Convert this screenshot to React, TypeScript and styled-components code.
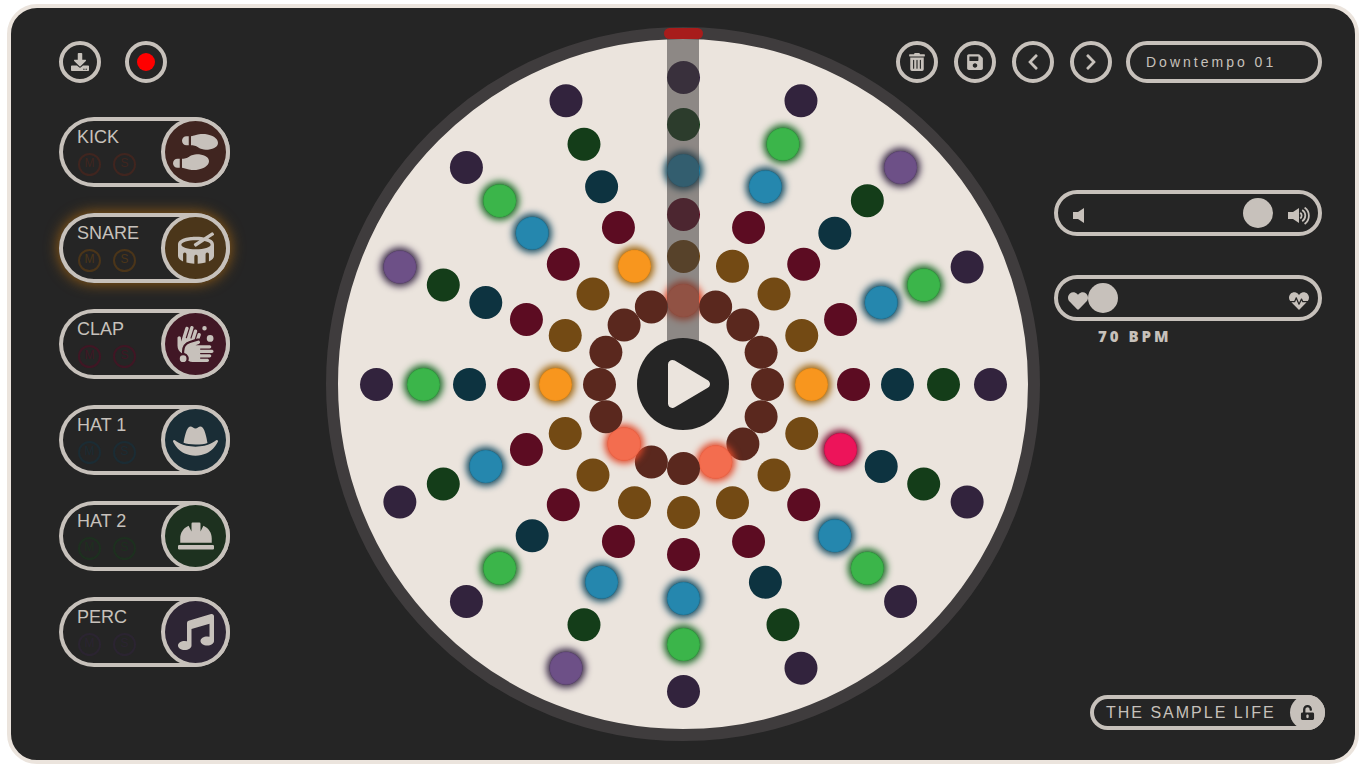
import React, { useState } from 'react';
import styled, { createGlobalStyle, css } from 'styled-components';
import {
  FaChevronLeft,
  FaChevronRight,
  FaDownload,
  FaDrum,
  FaHandsWash,
  FaHardHat,
  FaHatCowboy,
  FaHeart,
  FaHeartbeat,
  FaMusic,
  FaPlay,
  FaSave,
  FaShoePrints,
  FaTrashAlt,
  FaUnlockAlt,
} from 'react-icons/fa';

const ink = '#c7c1bb';
const cream = '#ebe4dd';
const dark = '#252525';
const rim = '#3f3c3d';

const GlobalStyle = createGlobalStyle`
  *, *::before, *::after { box-sizing: border-box; }
  body {
    margin: 0;
    background: #fff;
    color: ${ink};
    font-family: "Liberation Sans", Arial, sans-serif;
  }
  button, input { font: inherit; color: inherit; margin: 0; }
  button { padding: 0; background: none; cursor: pointer; }
`;

const Frame = styled.div`
  display: grid;
  min-height: calc(100vh - 8px);
  margin: 4px 7px;
  border: 4px solid ${cream};
  border-radius: 30px;
  background: ${dark};
  overflow: hidden;
`;

const Controls = styled.div`
  grid-area: 1 / 1;
  display: flex;
  justify-content: space-between;
  padding: 33px 30px 30px 48px;
`;

const LeftPanel = styled.section`
  display: flex;
  flex-direction: column;
  gap: 34px;
`;

const RightPanel = styled.section`
  display: flex;
  flex-direction: column;
  align-items: flex-end;
`;

const Toolbar = styled.div<{ $gap: number }>`
  display: flex;
  gap: ${(p) => p.$gap}px;
`;

const PresetBar = styled.div`
  display: flex;
  gap: 14px;
  padding-right: 3px;
`;

const RoundButton = styled.button`
  display: flex;
  align-items: center;
  justify-content: center;
  width: 42px;
  height: 42px;
  border: 4px solid ${ink};
  border-radius: 50%;
  svg { flex: none; width: 18px; height: 18px; }
`;

const RecordLight = styled.span`
  width: 18px;
  height: 18px;
  border-radius: 50%;
  background: #f00;
`;

const PresetName = styled.input`
  width: 196px;
  height: 42px;
  padding: 0 16px;
  border: 4px solid ${ink};
  border-radius: 21px;
  background: transparent;
  font-size: 14px;
  letter-spacing: 3px;
`;

const TrackList = styled.ul`
  display: flex;
  flex-direction: column;
  gap: 26px;
  margin: 0;
  padding: 0;
  list-style: none;
`;

const Track = styled.li<{ $glow?: boolean }>`
  display: flex;
  justify-content: space-between;
  width: 171px;
  height: 70px;
  border-radius: 35px;
  box-shadow: inset 0 0 0 4px ${ink}${(p) => (p.$glow ? ', 0 0 14px 1px #8f5a14' : '')};
`;

const TrackInfo = styled.div`
  padding: 10px 0 0 18px;
`;

const TrackName = styled.h2`
  margin: 0;
  font-size: 18px;
  line-height: 21px;
  font-weight: 400;
`;

const TrackSwitches = styled.div`
  display: flex;
  gap: 12px;
  margin: 5px 0 0 1px;
`;

const SmallSwitch = styled.button<{ $color: string }>`
  width: 23px;
  height: 23px;
  padding-bottom: 3px;
  border: 2px solid ${(p) => p.$color};
  border-radius: 50%;
  color: ${(p) => p.$color};
  font-size: 12px;
  line-height: 16px;
`;

const TrackPad = styled.button<{ $color: string; $iconWidth: number }>`
  display: flex;
  align-items: center;
  justify-content: center;
  width: 69px;
  height: 70px;
  border: 4px solid ${ink};
  border-radius: 50%;
  background: ${(p) => p.$color};
  svg {
    flex: none;
    height: 36px;
    width: ${(p) => p.$iconWidth}px;
  }
`;

const Sliders = styled.div`
  display: flex;
  flex-direction: column;
  gap: 39px;
  margin-top: 107px;
  padding-right: 3px;
`;

const SliderGroup = styled.div`
  display: flex;
  flex-direction: column;
`;

const SliderBox = styled.div`
  display: flex;
  align-items: center;
  justify-content: space-between;
  width: 268px;
  height: 46px;
  padding: 0 7px 0 8px;
  border: 4px solid ${ink};
  border-radius: 23px;
`;

const SliderIcon = styled.span`
  display: flex;
  justify-content: center;
  width: 24px;
  padding-top: 5px;
  svg { display: block; }
`;

const thumb = css`
  appearance: none;
  width: 30px;
  height: 30px;
  border: 0;
  border-radius: 50%;
  background: ${ink};
`;

const Range = styled.input`
  appearance: none;
  flex: 1;
  min-width: 0;
  height: 30px;
  margin: 0 8px 0 -2px;
  background: transparent;
  &::-webkit-slider-thumb { ${thumb} }
  &::-moz-range-thumb { ${thumb} }
`;

const Bpm = styled.output`
  padding: 5px 0 0 44px;
  font-family: "Open Sans", sans-serif;
  font-size: 15px;
  line-height: 20px;
  font-weight: 800;
  letter-spacing: 3px;
`;

const LibraryButton = styled.button`
  display: flex;
  align-items: center;
  justify-content: space-between;
  width: 235px;
  height: 35px;
  margin-top: auto;
  padding-left: 16px;
  border: 0;
  border-radius: 18px;
  box-shadow: inset 0 0 0 4px ${ink};
  font-size: 16px;
  letter-spacing: 2px;
`;

const LockBadge = styled.span`
  display: grid;
  place-items: center;
  width: 35px;
  height: 35px;
  border-radius: 50%;
  background: ${ink};
  color: ${dark};
  svg { height: 15px; width: auto; }
`;

const Wheel = styled.main`
  grid-area: 1 / 1;
  place-self: center;
  position: relative;
  display: grid;
  place-items: center;
  width: 714px;
  height: 714px;
  border: 12px solid ${rim};
  border-radius: 50%;
  background: ${cream};
`;

const Dot = styled.button<{ $angle: number; $radius: number; $fill: string; $glow?: string }>`
  position: absolute;
  top: calc(50% - 16px);
  left: calc(50% - 16px);
  width: 33px;
  height: 33px;
  border: 0;
  border-radius: 50%;
  background: ${(p) => p.$fill};
  box-shadow: ${(p) => (p.$glow ? `0 0 7px 3px ${p.$glow}, inset 0 0 1px ${p.$glow}` : 'none')};
  transform: rotate(${(p) => p.$angle}deg) translateY(-${(p) => p.$radius}px);
`;

const Playhead = styled.div`
  position: absolute;
  top: 0;
  left: calc(50% - 16px);
  width: 32px;
  height: 50%;
  background: ${rim};
  opacity: 0.55;
  pointer-events: none;
`;

const PlayheadCap = styled.div`
  position: absolute;
  top: -11px;
  left: calc(50% - 19px);
  width: 39px;
  height: 11px;
  border-radius: 6px;
  background: #a71c1b;
`;

const PlayButton = styled.button`
  position: relative;
  display: grid;
  place-items: center;
  width: 92px;
  height: 92px;
  padding-left: 11px;
  border: 0;
  border-radius: 50%;
  background: ${dark};
  color: ${cream};
  svg { height: 48px; width: auto; }
`;

const rings = [
  { name: 'Kick', radius: 84, off: '#5a281e', on: '#f36d4f', glow: '#e0492a', steps: [0, 7, 10] },
  { name: 'Snare', radius: 128, off: '#734a14', on: '#f8961e', glow: '#a0660f', steps: [4, 12, 15] },
  { name: 'Clap', radius: 170, off: '#5c0c22', on: '#ed145a', glow: '#7a0c30', steps: [5] },
  { name: 'Hat 1', radius: 214, off: '#0d3340', on: '#2587ae', glow: '#124a60', steps: [0, 1, 3, 6, 8, 9, 11, 14] },
  { name: 'Hat 2', radius: 260, off: '#143d19', on: '#3bb54a', glow: '#1b6a27', steps: [1, 3, 6, 8, 10, 12, 14] },
  { name: 'Perc', radius: 307, off: '#32233d', on: '#6d5087', glow: '#3a2a48', steps: [2, 9, 13] },
];

const tracks = [
  { name: 'KICK', line: '#40251f', pad: '#402520', Icon: FaShoePrints, iconWidth: 45 },
  { name: 'SNARE', line: '#4b3519', pad: '#4b361a', Icon: FaDrum, iconWidth: 36, glow: true },
  { name: 'CLAP', line: '#401624', pad: '#411725', Icon: FaHandsWash, iconWidth: 41 },
  { name: 'HAT 1', line: '#1b2c34', pad: '#1a2d36', Icon: FaHatCowboy, iconWidth: 45 },
  { name: 'HAT 2', line: '#1d301f', pad: '#1d311f', Icon: FaHardHat, iconWidth: 36 },
  { name: 'PERC', line: '#2b2431', pad: '#2d2534', Icon: FaMusic, iconWidth: 36 },
];

const speaker = 'M0 5h5l6-4v15l-6-4H0z';

const QuietIcon = () => (
  <svg width="11" height="17" viewBox="0 0 11 17" fill="currentColor" aria-hidden="true">
    <path d={speaker} />
  </svg>
);

const LoudIcon = () => (
  <svg width="23" height="18" viewBox="0 0 23 18" fill="currentColor" aria-hidden="true">
    <path d={speaker} />
    <g fill="none" stroke="currentColor" strokeWidth="1.8">
      <path d="M12.2 5.8a3.4 3.4 0 0 1 0 5.6" />
      <path d="M14.2 3a6.6 6.6 0 0 1 0 11.2" />
      <path d="M16.6 .6a10 10 0 0 1 0 16.4" />
    </g>
  </svg>
);

export default function App() {
  const [grid, setGrid] = useState(() =>
    rings.map((ring) => Array.from({ length: 16 }, (_, step) => ring.steps.includes(step))),
  );
  const [preset, setPreset] = useState('Downtempo 01');
  const [volume, setVolume] = useState(96);
  const [bpm, setBpm] = useState(70);

  const toggle = (r: number, s: number) =>
    setGrid((g) => g.map((row, i) => (i === r ? row.map((v, j) => (j === s ? !v : v)) : row)));

  return (
    <>
      <GlobalStyle />
      <Frame>
        <Controls>
          <LeftPanel>
            <Toolbar $gap={24}>
              <RoundButton aria-label="Download"><FaDownload /></RoundButton>
              <RoundButton aria-label="Record"><RecordLight /></RoundButton>
            </Toolbar>
            <TrackList>
              {tracks.map(({ name, line, pad, Icon, iconWidth, glow }) => (
                <Track key={name} $glow={glow}>
                  <TrackInfo>
                    <TrackName>{name}</TrackName>
                    <TrackSwitches>
                      <SmallSwitch $color={line} aria-label={`Mute ${name}`}>M</SmallSwitch>
                      <SmallSwitch $color={line} aria-label={`Solo ${name}`}>S</SmallSwitch>
                    </TrackSwitches>
                  </TrackInfo>
                  <TrackPad $color={pad} $iconWidth={iconWidth} aria-label={`Play ${name}`}>
                    <Icon />
                  </TrackPad>
                </Track>
              ))}
            </TrackList>
          </LeftPanel>

          <RightPanel>
            <PresetBar>
              <Toolbar $gap={16}>
                <RoundButton aria-label="Delete preset"><FaTrashAlt /></RoundButton>
                <RoundButton aria-label="Save preset"><FaSave /></RoundButton>
                <RoundButton aria-label="Previous preset"><FaChevronLeft /></RoundButton>
                <RoundButton aria-label="Next preset"><FaChevronRight /></RoundButton>
              </Toolbar>
              <PresetName
                aria-label="Preset name"
                value={preset}
                onChange={(e) => setPreset(e.target.value)}
              />
            </PresetBar>
            <Sliders>
              <SliderBox>
                <SliderIcon><QuietIcon /></SliderIcon>
                <Range
                  type="range"
                  aria-label="Volume"
                  value={volume}
                  onChange={(e) => setVolume(Number(e.target.value))}
                />
                <SliderIcon><LoudIcon /></SliderIcon>
              </SliderBox>
              <SliderGroup>
                <SliderBox>
                  <SliderIcon><FaHeart size={20} /></SliderIcon>
                  <Range
                    type="range"
                    aria-label="Tempo"
                    min={70}
                    max={180}
                    value={bpm}
                    onChange={(e) => setBpm(Number(e.target.value))}
                  />
                  <SliderIcon><FaHeartbeat size={20} /></SliderIcon>
                </SliderBox>
                <Bpm>{bpm} BPM</Bpm>
              </SliderGroup>
            </Sliders>
            <LibraryButton>
              THE SAMPLE LIFE
              <LockBadge><FaUnlockAlt /></LockBadge>
            </LibraryButton>
          </RightPanel>
        </Controls>

        <Wheel>
          {rings.map((ring, r) =>
            grid[r].map((on, s) => (
              <Dot
                key={`${ring.name}-${s}`}
                aria-label={`${ring.name} step ${s + 1}`}
                aria-pressed={on}
                $angle={s * 22.5}
                $radius={ring.radius}
                $fill={on ? ring.on : ring.off}
                $glow={on ? ring.glow : undefined}
                onClick={() => toggle(r, s)}
              />
            )),
          )}
          <Playhead />
          <PlayheadCap />
          <PlayButton aria-label="Play"><FaPlay /></PlayButton>
        </Wheel>
      </Frame>
    </>
  );
}
